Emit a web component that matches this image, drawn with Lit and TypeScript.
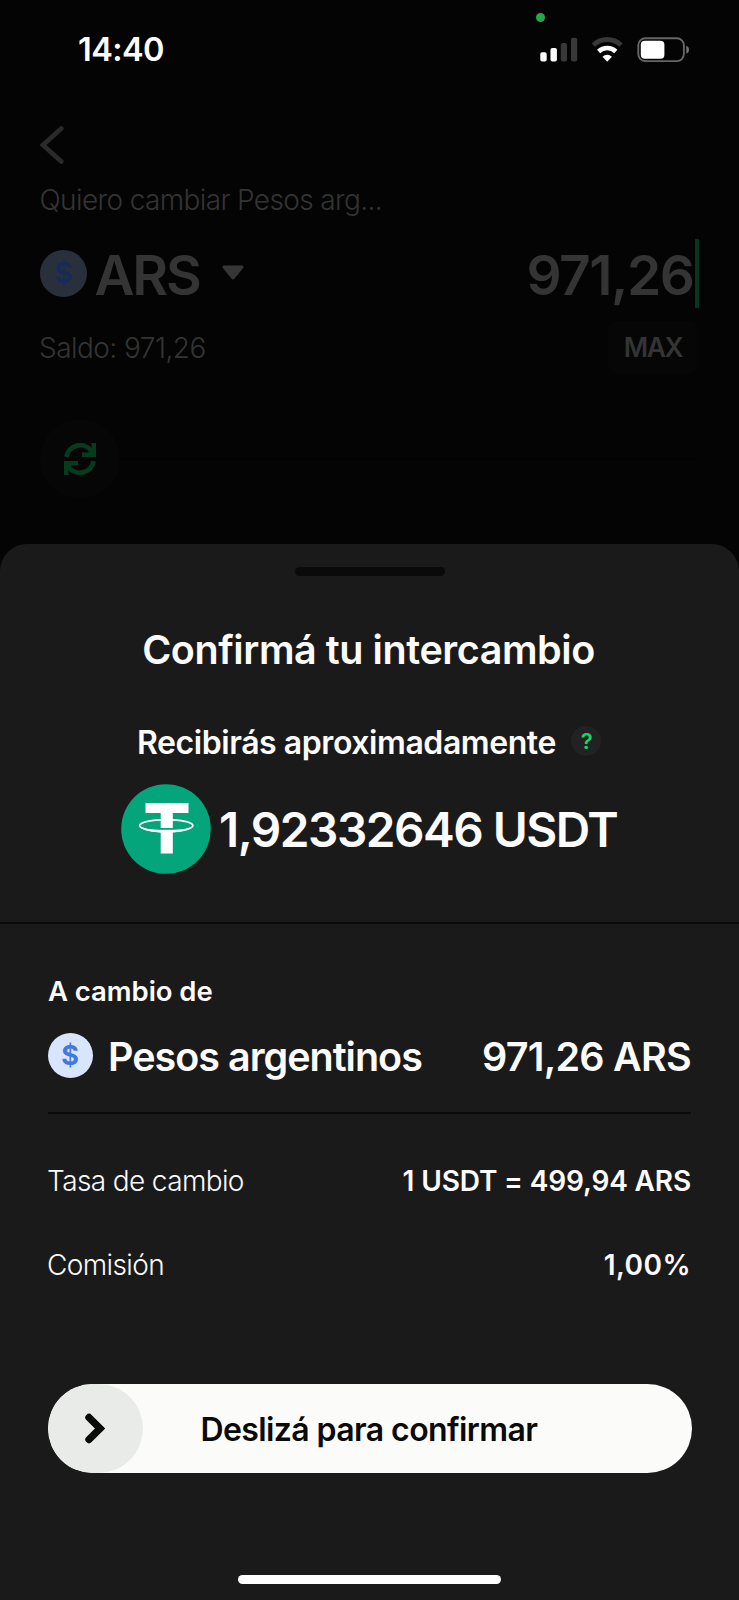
import { LitElement, html, css, svg } from "lit";
import { customElement, property } from "lit/decorators.js";

@customElement("status-bar")
class StatusBar extends LitElement {
  static styles = css`
    :host { display: flex; box-sizing: border-box; height: 99px; padding: 0 49px 0 78px; align-items: center; justify-content: space-between; position: relative; color: #fff; }
    .time { font-size: 32.5px; font-weight: 600; letter-spacing: -0.6px; line-height: 40px; }
    .icons { display: block; width: 151px; height: 26px; }
    .dot { position: absolute; left: 535.5px; top: 12.5px; width: 9px; height: 9px; border-radius: 50%; background: #27a846; }
  `;
  render() {
    return html`
      <span class="time">14:40</span>
      <span class="dot"></span>
      <svg class="icons" viewBox="539 36.5 151 26">
        <rect x="540.3" y="51.7" width="6.4" height="9.3" rx="1.8" fill="#fff" />
        <rect x="550.5" y="47.5" width="6.4" height="13.5" rx="1.8" fill="#fff" />
        <rect x="560.8" y="42.5" width="6.2" height="18.5" rx="1.8" fill="#383838" />
        <rect x="571" y="37.3" width="6.2" height="23.7" rx="1.8" fill="#383838" />
        <path d="M593.4 44.6a19.8 19.8 0 0 1 27.6 0" fill="none" stroke="#383838" stroke-width="4.8" />
        <path d="M598.6 51a12.4 12.4 0 0 1 17.2 0" fill="none" stroke="#fff" stroke-width="4.6" />
        <path d="M607.2 61.200l-4.700-4.900a6.700 6.700 0 0 1 9.400 0z" fill="#fff" />
        <rect x="638.3" y="37.8" width="45.6" height="22.8" rx="7" fill="none" stroke="#666" stroke-width="1.9" />
        <rect x="640.8" y="40.2" width="23.6" height="18" rx="4" fill="#fff" />
        <path d="M686.300 45.300c3.600 1.200 3.600 6.800 0 8z" fill="#777" />
      </svg>
    `;
  }
}

@customElement("peso-coin")
class PesoCoin extends LitElement {
  static styles = css`
    :host { display: flex; align-items: center; justify-content: center; width: 45px; height: 45px; border-radius: 50%; background: #d9e5fd; color: #4479dc; font-size: 27px; font-weight: 700; line-height: 1; flex: none; }
    :host([dim]) { width: 47px; height: 47px; background: #2a303b; color: #172b58; font-size: 28px; }
  `;
  @property({ type: Boolean, reflect: true }) dim = false;
  render() {
    return html`$`;
  }
}

@customElement("exchange-form")
class ExchangeForm extends LitElement {
  static styles = css`
    :host { display: flow-root; height: 445px; color: #343434; }
    .back { display: block; margin: 27px 0 0 40px; width: 24px; height: 38px; }
    .label { margin: 16px 0 0 39.5px; height: 40px; line-height: 41px; font-size: 28px; font-weight: 300; letter-spacing: -0.63px; }
    .row { display: flex; align-items: center; justify-content: space-between; }
    .currency { box-sizing: border-box; height: 101px; padding: 7px 40px 0 40px; font-size: 55px; font-weight: 600; line-height: 70px; }
    .coin { display: flex; align-items: center; }
    .coin peso-coin { margin-top: -2px; }
    .ars { margin-left: 7.5px; letter-spacing: -2.2px; margin-top: 1px; }
    .caret { width: 22px; height: 15px; margin-left: 22.5px; margin-top: -3px; }
    .amount { display: flex; align-items: center; letter-spacing: -1.5px; margin-top: 1px; }
    .cursor { width: 4px; height: 69px; margin-left: 1.5px; margin-top: -2px; background: #083520; }
    .balance { height: 53px; padding: 0 41px 0 39px; font-size: 28px; font-weight: 300; letter-spacing: -0.54px; }
    .max { width: 90px; height: 53px; line-height: 53px; border-radius: 10px; background: #060606; text-align: center; font-size: 26.5px; font-weight: 600; letter-spacing: -1.5px; }
    .divider { display: flex; align-items: center; padding: 0 42px 0 40px; margin-top: 45px; }
    .swap { display: flex; width: 80px; height: 80px; border-radius: 50%; background: #060606; align-items: center; justify-content: center; }
    .swap svg { width: 32px; height: 32px; }
    .rule { flex: 1; height: 2px; background: #020202; }
  `;
  render() {
    const arrow = svg`
      <path d="M2.400 14A14 14 0 0 1 27.500 8" fill="none" stroke="#083a20" stroke-width="4.800" />
      <path d="M27.500 0H32V14H18V9.500H24L27.500 6Z" fill="#083a20" />`;
    return html`
      <svg class="back" viewBox="0 0 24 38"><path d="M21.300 2.500L3 19L21.300 35.500" fill="none" stroke="#2a2a2a" stroke-width="4.600" stroke-linecap="round" /></svg>
      <div class="label">Quiero cambiar Pesos arg...</div>
      <div class="row currency">
        <div class="coin">
          <peso-coin dim></peso-coin>
          <span class="ars">ARS</span>
          <svg class="caret" viewBox="0 0 22 15"><path d="M2 2H20L11 13Z" fill="#363636" stroke="#363636" stroke-width="3" stroke-linejoin="round" /></svg>
        </div>
        <div class="amount">971,26<span class="cursor"></span></div>
      </div>
      <div class="row balance"><span>Saldo: 971,26</span><span class="max">MAX</span></div>
      <div class="divider">
        <span class="swap"><svg viewBox="0 0 32 32">${arrow}<g transform="rotate(180 16 16)">${arrow}</g></svg></span>
        <span class="rule"></span>
      </div>
    `;
  }
}

@customElement("confirm-sheet")
class ConfirmSheet extends LitElement {
  static styles = css`
    :host { display: flex; flex-direction: column; box-sizing: border-box; height: 1056px; padding-top: 23px; border-radius: 27px 27px 0 0; background: #1a1a1a; color: #fcfcfc; font-weight: 600; }
    .handle { align-self: center; width: 150px; height: 9px; border-radius: 5px; background: #0a0a0a; }
    .title { margin: 44px 2px 0 0; line-height: 61px; height: 60px; text-align: center; font-size: 39.5px; letter-spacing: -0.43px; }
    .receive { display: flex; align-items: center; margin: 42px 0 0 137px; height: 40px; font-size: 32px; letter-spacing: -0.43px; line-height: 40px; }
    .receive span:first-child { padding-top: 1px; }
    .help { width: 30px; height: 30px; margin-left: 15.5px; margin-top: -2px; border-radius: 50%; background: #222; color: #13d866; font-size: 22px; font-weight: 600; line-height: 30px; text-align: center; }
    .total { display: flex; align-items: center; margin: 22px 0 0 121px; height: 90px; font-size: 47.7px; letter-spacing: -1.5px; white-space: nowrap; }
    .total span { padding-top: 2px; }
    .total svg { width: 90px; height: 90px; margin-right: 8px; }
    .full { height: 2px; margin-top: 48px; background: #0a0a0a; }
    .details { display: flex; flex-direction: column; padding: 0 48px; }
    .caption { margin-top: 52px; line-height: 30px; font-size: 27.5px; letter-spacing: -0.05px; }
    .row { display: flex; align-items: center; justify-content: space-between; }
    .paid { margin-top: 26px; height: 46px; font-size: 39.5px; line-height: 46px; }
    .name { display: flex; align-items: center; letter-spacing: -1px; }
    .name, .value { padding-top: 3px; }
    .name peso-coin { margin: -3px 15.5px 0 -0.5px; letter-spacing: 0; }
    .value { letter-spacing: -0.75px; }
    .rule { height: 2px; margin-top: 34px; background: #0a0a0a; }
    .item { margin-top: 44px; height: 40px; font-size: 28px; letter-spacing: -0.15px; }
    .rule + .item { margin-top: 47px; }
    .key { font-weight: 300; letter-spacing: -0.62px; color: #fafafa; margin-left: -1px; }
    .percent { letter-spacing: 0.45px; }
    .slider { display: flex; align-items: center; margin: 98.5px -0.5px 0; height: 89px; border-radius: 45px; background: #fbfcf9; color: #0a0a0a; font-size: 32px; letter-spacing: -0.6px; overflow: hidden; }
    .knob { display: flex; width: 95px; height: 89px; border-radius: 45px; background: #e9ebe9; align-items: center; justify-content: center; }
    .knob svg { width: 20px; height: 31px; }
    .slide-text { margin: 3px 0 0 58px; }
    .home { align-self: center; width: 263px; height: 9.5px; margin-top: 102px; border-radius: 5px; background: #fff; }
  `;
  render() {
    return html`
      <div class="handle"></div>
      <div class="title">Confirmá tu intercambio</div>
      <div class="receive"><span>Recibirás aproximadamente</span><span class="help">?</span></div>
      <div class="total">
        <svg viewBox="0 0 90 90">
          <circle cx="45" cy="45" r="44.800" fill="#04a57a" />
          <ellipse cx="45.300" cy="41.600" rx="26.600" ry="6" fill="none" stroke="#fff" stroke-width="1.700" />
          <path d="M24.500 18.900H67.500V29H51.800V44H39.700V29H24.500Z" fill="#fff" />
          <path d="M18.800 42.500C23 50.500 67.600 50.500 71.800 42.500C64 47.300 26.600 47.300 18.800 42.500Z" fill="#fff" />
          <path d="M39.700 45.700H51.800V69.500H39.700Z" fill="#fff" />
          <path d="M39.700 44.700H51.800" stroke="#04a57a" stroke-width="1.200" />
        </svg>
        <span>1,92332646 USDT</span>
      </div>
      <div class="full"></div>
      <div class="details">
        <div class="caption">A cambio de</div>
        <div class="row paid">
          <span class="name"><peso-coin></peso-coin>Pesos argentinos</span>
          <span class="value">971,26 ARS</span>
        </div>
        <div class="rule"></div>
        <div class="row item"><span class="key">Tasa de cambio</span><span>1 USDT = 499,94 ARS</span></div>
        <div class="row item"><span class="key">Comisión</span><span class="percent">1,00%</span></div>
        <div class="slider">
          <span class="knob"><svg viewBox="0 0 20 31"><path d="M4 4.500L15 15.500L4 26.500" fill="none" stroke="#0a0a0a" stroke-width="7.400" stroke-linecap="round" /></svg></span>
          <span class="slide-text">Deslizá para confirmar</span>
        </div>
      </div>
      <div class="home"></div>
    `;
  }
}

@customElement("app-root")
class AppRoot extends LitElement {
  static styles = css`
    :host { display: block; width: 739px; height: 1600px; overflow: hidden; background: #040404; font-family: Inter, "Liberation Sans", sans-serif; }
  `;
  render() {
    return html`<status-bar></status-bar><exchange-form></exchange-form><confirm-sheet></confirm-sheet>`;
  }
}
